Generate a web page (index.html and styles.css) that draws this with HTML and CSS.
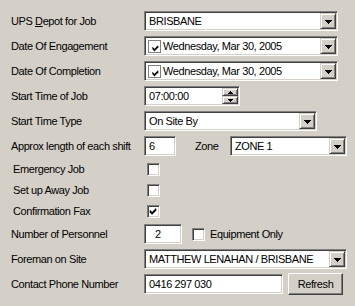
FILE: index.html
```html
<!DOCTYPE html>
<html>
<head>
<meta charset="utf-8">
<link rel="stylesheet" href="styles.css">
</head>
<body>
<svg width="0" height="0" class="defs">
  <defs>
    <g id="arrow"><path d="M0 0h7v1H0zM1 1h5v1H1zM2 2h3v1H2zM3 3h1v1H3z"/></g>
    <g id="tick"><path d="M9 3h1v1H9zM8 4h2v1H8zM3 5h1v1H3zM7 5h3v1H7zM3 6h2v1H3zM6 6h3v1H6zM3 7h5v1H3zM4 8h3v1H4zM5 9h1v1H5z"/></g>
  </defs>
</svg>
<div class="form">
  <div class="row">
    <span class="label">UPS <u>D</u>epot for Job</span>
    <div class="field w-wide"><span class="val">BRISBANE</span><span class="dd"><svg width="7" height="4"><use href="#arrow"/></svg></span></div>
  </div>
  <div class="row">
    <span class="label">Date Of Engagement</span>
    <div class="field w-wide"><span class="dbox"><svg width="13" height="13" viewBox="-1 -1 13 13"><use href="#tick"/></svg></span><span class="val dval">Wednesday, Mar 30, 2005</span><span class="dd"><svg width="7" height="4"><use href="#arrow"/></svg></span></div>
  </div>
  <div class="row">
    <span class="label">Date Of Completion</span>
    <div class="field w-wide"><span class="dbox"><svg width="13" height="13" viewBox="-1 -1 13 13"><use href="#tick"/></svg></span><span class="val dval">Wednesday, Mar 30, 2005</span><span class="dd"><svg width="7" height="4"><use href="#arrow"/></svg></span></div>
  </div>
  <div class="row">
    <span class="label">Start Time of Job</span>
    <div class="field w-time"><span class="val">07:00:00</span>
      <span class="spin"><span class="sb"><svg width="5" height="3"><path d="M2 0h1v1H2zM1 1h3v1H1zM0 2h5v1H0z"/></svg></span><span class="sb"><svg width="5" height="3"><path d="M0 0h5v1H0zM1 1h3v1H1zM2 2h1v1H2z"/></svg></span></span>
    </div>
  </div>
  <div class="row">
    <span class="label">Start Time Type</span>
    <div class="field w-type"><span class="val">On Site By</span><span class="dd"><svg width="7" height="4"><use href="#arrow"/></svg></span></div>
  </div>
  <div class="row">
    <span class="label">Approx length of each shift</span>
    <div class="field w-shift"><span class="val">6</span></div>
    <span class="zone">Zone</span>
    <div class="field w-zone"><span class="val">ZONE 1</span><span class="dd"><svg width="7" height="4"><use href="#arrow"/></svg></span></div>
  </div>
  <div class="row check">
    <span class="label">Emergency Job</span>
    <span class="cb"></span>
  </div>
  <div class="row check">
    <span class="label">Set up Away Job</span>
    <span class="cb"></span>
  </div>
  <div class="row check">
    <span class="label">Confirmation Fax</span>
    <span class="cb"><svg width="13" height="13" viewBox="0 0 13 13"><use href="#tick"/></svg></span>
  </div>
  <div class="row">
    <span class="label">Number of Personnel</span>
    <div class="field w-pers"><span class="val num">2</span></div>
    <span class="cb eq"></span>
    <span class="eq-label">Equipment Only</span>
  </div>
  <div class="row">
    <span class="label">Foreman on Site</span>
    <div class="field w-fore"><span class="val">MATTHEW LENAHAN / BRISBANE</span><span class="dd"><svg width="7" height="4"><use href="#arrow"/></svg></span></div>
  </div>
  <div class="row">
    <span class="label">Contact Phone Number</span>
    <div class="field w-phone"><span class="val">0416 297 030</span></div>
    <span class="btn">Refresh</span>
  </div>
</div>
</body>
</html>
```
FILE: styles.css
```css
html, body {
  margin: 0;
  padding: 0;
}
body {
  width: 355px;
  height: 306px;
  overflow: hidden;
  background: #d4d0c8;
  color: #000;
  font-family: "Liberation Sans", Arial, sans-serif;
  font-size: 11px;
  letter-spacing: -0.4px;
}
.defs {
  position: absolute;
}
.form {
  display: flex;
  flex-direction: column;
  gap: 5px;
  padding-top: 11px;
}
.row {
  display: flex;
  align-items: center;
  height: 20px;
}
.row.check {
  height: 16px;
}
.label {
  flex: none;
  width: 144px;
  box-sizing: border-box;
  padding-left: 11px;
  white-space: nowrap;
}
.check .label {
  padding-left: 13px;
}
.field {
  flex: none;
  box-sizing: border-box;
  height: 20px;
  background: #fff;
  border: 1px solid;
  border-color: #808080 #fff #fff #808080;
  box-shadow: inset 1px 1px #404040, inset -1px -1px #d4d0c8;
  padding: 1px;
  display: flex;
  align-items: center;
}
.val {
  padding-left: 3px;
  line-height: 14px;
  white-space: nowrap;
}
.dval {
  padding-left: 2px;
}
.num {
  padding-left: 9px;
}
.w-wide { width: 194px; }
.w-time { width: 96px; }
.w-type { width: 173px; }
.w-shift { width: 32px; }
.w-zone { width: 117px; }
.w-pers { width: 38px; }
.w-fore { width: 203px; }
.w-phone { width: 139px; }
.dd {
  flex: none;
  margin-left: auto;
  width: 16px;
  height: 16px;
  box-sizing: border-box;
  background: #d4d0c8;
  border: 1px solid;
  border-color: #d4d0c8 #404040 #404040 #d4d0c8;
  box-shadow: inset 1px 1px #fff, inset -1px -1px #808080;
  display: flex;
  align-items: center;
  justify-content: center;
}
.dd svg {
  display: block;
  margin-top: 1px;
}
.dbox {
  flex: none;
  width: 13px;
  height: 13px;
  box-sizing: border-box;
  margin-left: 2px;
  border: 1px solid #808080;
  background: #fff;
  display: flex;
}
.dbox svg, .cb svg {
  display: block;
}
.spin {
  flex: none;
  margin-left: auto;
  width: 16px;
  height: 16px;
  display: flex;
  flex-direction: column;
}
.sb {
  flex: none;
  height: 8px;
  box-sizing: border-box;
  background: #d4d0c8;
  border: 1px solid;
  border-color: #d4d0c8 #404040 #404040 #d4d0c8;
  box-shadow: inset 1px 1px #fff, inset -1px -1px #808080;
  display: flex;
  align-items: center;
  justify-content: center;
}
.sb svg {
  display: block;
}
.zone {
  flex: none;
  margin-left: 19px;
  width: 35px;
}
.cb {
  flex: none;
  width: 13px;
  height: 13px;
  box-sizing: border-box;
  margin-left: 3px;
  background: #fff;
  border: 1px solid;
  border-color: #808080 #fff #fff #808080;
  box-shadow: inset 1px 1px #404040, inset -1px -1px #d4d0c8;
  display: flex;
}
.cb svg {
  margin: -1px 0 0 -1px;
}
.cb.eq {
  margin-left: 10px;
}
.eq-label {
  margin-left: 5px;
  white-space: nowrap;
}
.btn {
  flex: none;
  margin-left: 5px;
  width: 55px;
  height: 22px;
  box-sizing: border-box;
  background: #d4d0c8;
  border: 1px solid;
  border-color: #fff #404040 #404040 #fff;
  box-shadow: inset -1px -1px #808080;
  display: flex;
  align-items: center;
  justify-content: center;
}
```
